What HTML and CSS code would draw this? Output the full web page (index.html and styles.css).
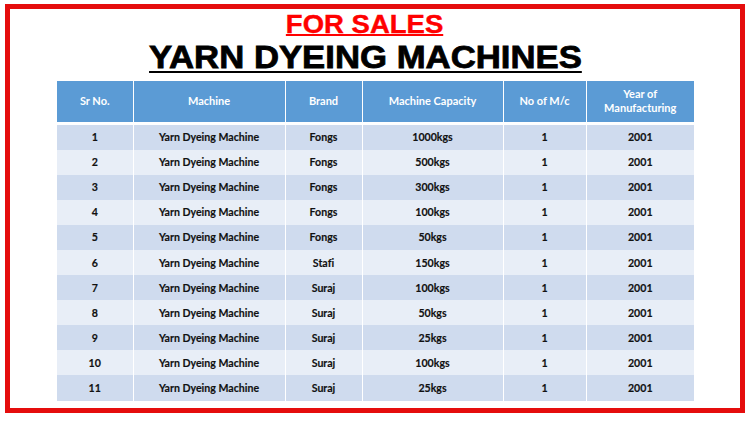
FILE: index.html
```html
<!DOCTYPE html>
<html>
<head>
<meta charset="utf-8">
<link rel="stylesheet" href="styles.css">
</head>
<body>
<div class="frame">
  <div class="titles">
    <div class="sale"><span>FOR SALES</span></div>
    <div class="main"><span>YARN DYEING MACHINES</span></div>
  </div>
  <table class="grid">
    <colgroup>
      <col class="c1"><col class="c2"><col class="c3"><col class="c4"><col class="c5"><col class="c6">
    </colgroup>
    <thead>
      <tr><th>Sr No.</th><th>Machine</th><th>Brand</th><th>Machine Capacity</th><th>No of M/c</th><th>Year of<br>Manufacturing</th></tr>
    </thead>
    <tbody>
      <tr><td>1</td><td>Yarn Dyeing Machine</td><td>Fongs</td><td>1000kgs</td><td>1</td><td>2001</td></tr>
      <tr><td>2</td><td>Yarn Dyeing Machine</td><td>Fongs</td><td>500kgs</td><td>1</td><td>2001</td></tr>
      <tr><td>3</td><td>Yarn Dyeing Machine</td><td>Fongs</td><td>300kgs</td><td>1</td><td>2001</td></tr>
      <tr><td>4</td><td>Yarn Dyeing Machine</td><td>Fongs</td><td>100kgs</td><td>1</td><td>2001</td></tr>
      <tr><td>5</td><td>Yarn Dyeing Machine</td><td>Fongs</td><td>50kgs</td><td>1</td><td>2001</td></tr>
      <tr><td>6</td><td>Yarn Dyeing Machine</td><td>Stafi</td><td>150kgs</td><td>1</td><td>2001</td></tr>
      <tr><td>7</td><td>Yarn Dyeing Machine</td><td>Suraj</td><td>100kgs</td><td>1</td><td>2001</td></tr>
      <tr><td>8</td><td>Yarn Dyeing Machine</td><td>Suraj</td><td>50kgs</td><td>1</td><td>2001</td></tr>
      <tr><td>9</td><td>Yarn Dyeing Machine</td><td>Suraj</td><td>25kgs</td><td>1</td><td>2001</td></tr>
      <tr><td>10</td><td>Yarn Dyeing Machine</td><td>Suraj</td><td>100kgs</td><td>1</td><td>2001</td></tr>
      <tr><td>11</td><td>Yarn Dyeing Machine</td><td>Suraj</td><td>25kgs</td><td>1</td><td>2001</td></tr>
    </tbody>
  </table>
</div>
</body>
</html>
```
FILE: styles.css
```css
html, body {
  margin: 0;
  padding: 0;
  background: #ffffff;
}
.frame {
  box-sizing: border-box;
  margin: 4px 0 0 5px;
  width: 740px;
  height: 409px;
  border: 5px solid #e50d0d;
  display: flex;
  flex-direction: column;
}
.titles {
  padding-top: 2.5px;
  padding-right: 20px;
  display: flex;
  flex-direction: column;
  align-items: center;
  font-family: "Liberation Sans", Arial, sans-serif;
  font-weight: bold;
}
.sale {
  font-size: 25px;
  line-height: 25px;
  height: 29px;
  color: #ff0000;
}
.sale span {
  display: inline-block;
  transform: scaleX(1.1);
  text-decoration: underline;
  text-decoration-thickness: 2px;
  text-underline-offset: 1px;
  -webkit-text-stroke: 0.4px #ff0000;
}
.main {
  font-size: 32px;
  line-height: 32px;
  height: 40px;
  color: #000000;
}
.main span {
  display: inline-block;
  transform: scaleX(1.085);
  text-decoration: underline;
  text-decoration-thickness: 2px;
  text-underline-offset: 3px;
  -webkit-text-stroke: 0.8px #000000;
}
.grid {
  margin-left: 47px;
  width: 637px;
  table-layout: fixed;
  border-collapse: collapse;
  font-family: Lato, "Open Sans", sans-serif;
  font-weight: bold;
  font-size: 10.6px;
  text-align: center;
  font-variant-ligatures: none;
}
.c1 { width: 76px; }
.c2 { width: 152px; }
.c3 { width: 77px; }
.c4 { width: 141px; }
.c5 { width: 83px; }
.c6 { width: 108px; }
.grid th {
  background: #5b9bd5;
  color: #ffffff;
  font-weight: bold;
  font-size: 11px;
  height: 41px;
  padding: 0;
  line-height: 14px;
  border-left: 1px solid #ffffff;
  border-right: 1px solid #ffffff;
  border-bottom: 3px solid #ffffff;
}
.grid td {
  height: 25.1px;
  padding: 0;
  color: #111111;
  -webkit-text-stroke: 0.15px #111111;
  border-left: 1px solid #ffffff;
  border-right: 1px solid #ffffff;
}
.grid th:first-child, .grid td:first-child { border-left: none; }
.grid th:last-child, .grid td:last-child { border-right: none; }
.grid tbody tr:nth-child(odd) td { background: #cfdbee; }
.grid tbody tr:nth-child(even) td { background: #e8eef7; }
```
